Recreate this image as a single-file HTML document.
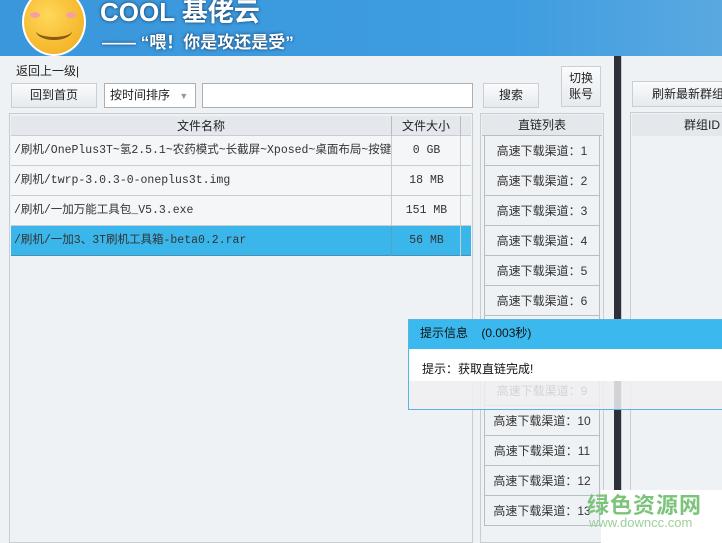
<!DOCTYPE html>
<html><head><meta charset="utf-8"><style>
*{margin:0;padding:0;box-sizing:border-box}
body{width:722px;height:543px;overflow:hidden;position:relative;background:#eef2f5;font-family:"Liberation Sans","Noto Sans CJK SC",sans-serif;font-size:12px;color:#222}
.a{position:absolute}
.btn{position:absolute;border:1px solid #c9cfd4;background:linear-gradient(#fafbfc,#e6eaee);text-align:center;font-size:12px}
.ch{position:absolute;left:484px;width:116px;height:30px;border:1px solid #b8bec4;border-top:none;background:#eef2f5;line-height:30px;text-align:center;color:#333}
.row{position:absolute;left:11px;width:460px;height:30px;border-bottom:1px solid #c8cdd2;background:#f4f6f8;line-height:30px;font-family:"Liberation Mono","Noto Sans CJK SC",monospace;font-size:11.5px;color:#333}
.row .n{position:absolute;left:3px;white-space:nowrap}
.row .s{position:absolute;left:380px;width:70px;text-align:center;border-left:1px solid #c8cdd2;height:30px}
</style></head><body>
<div class="a" style="left:0;top:0;width:722px;height:56px;background:linear-gradient(90deg,#3a97dc,#3e9ce0 70%,#5aa9e0)"></div>
<div class="a" style="left:22px;top:-12px;width:64px;height:68px;border-radius:50%;background:radial-gradient(circle at 40% 40%,#ffd85a,#f0a818);border:2px solid #fff"></div>
<div class="a" style="left:36px;top:22px;width:36px;height:18px;border-bottom:3px solid #8a5a10;border-radius:0 0 50% 50%"></div>
<div class="a" style="left:30px;top:12px;width:10px;height:6px;border-radius:50%;background:#f6a0a0"></div>
<div class="a" style="left:66px;top:12px;width:10px;height:6px;border-radius:50%;background:#f6a0a0"></div>
<div class="a" style="left:100px;top:-8px;color:#fff;font-size:26px;font-weight:bold;text-shadow:0 0 3px #135">COOL 基佬云</div>
<div class="a" style="left:102px;top:28px;color:#fff;font-size:17px;font-weight:bold;text-shadow:0 0 3px #135">—— “喂！你是攻还是受”</div>
<div class="a" style="left:614px;top:56px;width:7px;height:487px;background:#2d303a"></div>
<div class="a" style="left:621px;top:56px;width:101px;height:487px;background:#eef2f5;border-left:1px solid #c8cdd2"></div>
<div class="a" style="left:16px;top:62px">返回上一级|</div>
<div class="btn" style="left:11px;top:83px;width:86px;height:25px;line-height:23px">回到首页</div>
<div class="a" style="left:104px;top:83px;width:92px;height:25px;border:1px solid #a9b0b6;background:#fff;line-height:23px;padding-left:5px">按时间排序 <span style="color:#999;font-size:9px;margin-left:6px">▼</span></div>
<div class="a" style="left:202px;top:83px;width:271px;height:25px;border:1px solid #a9b0b6;background:#fff"></div>
<div class="btn" style="left:483px;top:83px;width:56px;height:25px;line-height:23px">搜索</div>
<div class="btn" style="left:561px;top:66px;width:40px;height:41px;line-height:16px;padding-top:3px">切换<br>账号</div>
<div class="btn" style="left:632px;top:81px;width:95px;height:26px;line-height:24px;text-align:left;padding-left:19px">刷新最新群组</div>
<div class="a" style="left:630px;top:112px;width:100px;height:430px;border:1px solid #c8cdd2"></div>
<div class="a" style="left:632px;top:114px;width:95px;height:22px;background:#e4e8ec;line-height:22px;padding-left:52px">群组ID</div>
<div class="a" style="left:9px;top:113px;width:464px;height:430px;border:1px solid #c8cdd2;background:#eef2f5"></div>
<div class="a" style="left:11px;top:116px;width:460px;height:20px;background:#e4e8ec;border-bottom:1px solid #c8cdd2;line-height:20px">
<span class="a" style="left:0;width:380px;text-align:center">文件名称</span>
<span class="a" style="left:380px;width:70px;text-align:center;border-left:1px solid #bbb;border-right:1px solid #bbb;height:20px">文件大小</span></div>
<div class="row" style="top:136px"><span class="n">/刷机/OnePlus3T~氢2.5.1~农药模式~长截屏~Xposed~桌面布局~按键</span><span class="s">0 GB</span></div>
<div class="row" style="top:166px"><span class="n">/刷机/twrp-3.0.3-0-oneplus3t.img</span><span class="s">18 MB</span></div>
<div class="row" style="top:196px"><span class="n">/刷机/一加万能工具包_V5.3.exe</span><span class="s">151 MB</span></div>
<div class="row" style="top:226px;background:#3bb6ea;border-bottom:1px solid #4a90b0"><span class="n">/刷机/一加3、3T刷机工具箱-beta0.2.rar</span><span class="s" style="border-color:#5aa0c0">56 MB</span></div>
<div class="a" style="left:460px;top:136px;width:1px;height:120px;background:#c8cdd2"></div>
<div class="a" style="left:480px;top:113px;width:124px;height:430px;border:1px solid #c8cdd2"></div>
<div class="a" style="left:482px;top:115px;width:120px;height:21px;background:#e4e8ec;border-bottom:1px solid #b8bec4;line-height:21px;text-align:center">直链列表</div>
<div class="ch" style="top:136px">高速下载渠道：1</div>
<div class="ch" style="top:166px">高速下载渠道：2</div>
<div class="ch" style="top:196px">高速下载渠道：3</div>
<div class="ch" style="top:226px">高速下载渠道：4</div>
<div class="ch" style="top:256px">高速下载渠道：5</div>
<div class="ch" style="top:286px">高速下载渠道：6</div>
<div class="ch" style="top:316px">高速下载渠道：7</div>
<div class="ch" style="top:346px">高速下载渠道：8</div>
<div class="ch" style="top:376px">高速下载渠道：9</div>
<div class="ch" style="top:406px">高速下载渠道：10</div>
<div class="ch" style="top:436px">高速下载渠道：11</div>
<div class="ch" style="top:466px">高速下载渠道：12</div>
<div class="ch" style="top:496px">高速下载渠道：13</div>
<div class="a" style="left:408px;top:319px;width:320px;height:91px;border:1px solid #5ab4e0;background:rgba(240,240,242,0.85)">
<div style="height:29px;background:#3bb9ef;line-height:27px;padding-left:11px;color:#111">提示信息 <span style="margin-left:10px">(0.003秒)</span></div>
<div style="height:32px;background:#fff;line-height:40px;padding-left:13px;color:#111">提示：获取直链完成!</div>
</div>
<div class="a" style="left:601px;top:490px;width:121px;height:53px;background:#fff"></div>
<div class="a" style="left:587px;top:488px;color:#7cc47a;font-size:22px;font-weight:bold;letter-spacing:1px">绿色资源网</div>
<div class="a" style="left:589px;top:515px;color:#9ccf9a;font-size:13px">www.downcc.com</div>
</body></html>
